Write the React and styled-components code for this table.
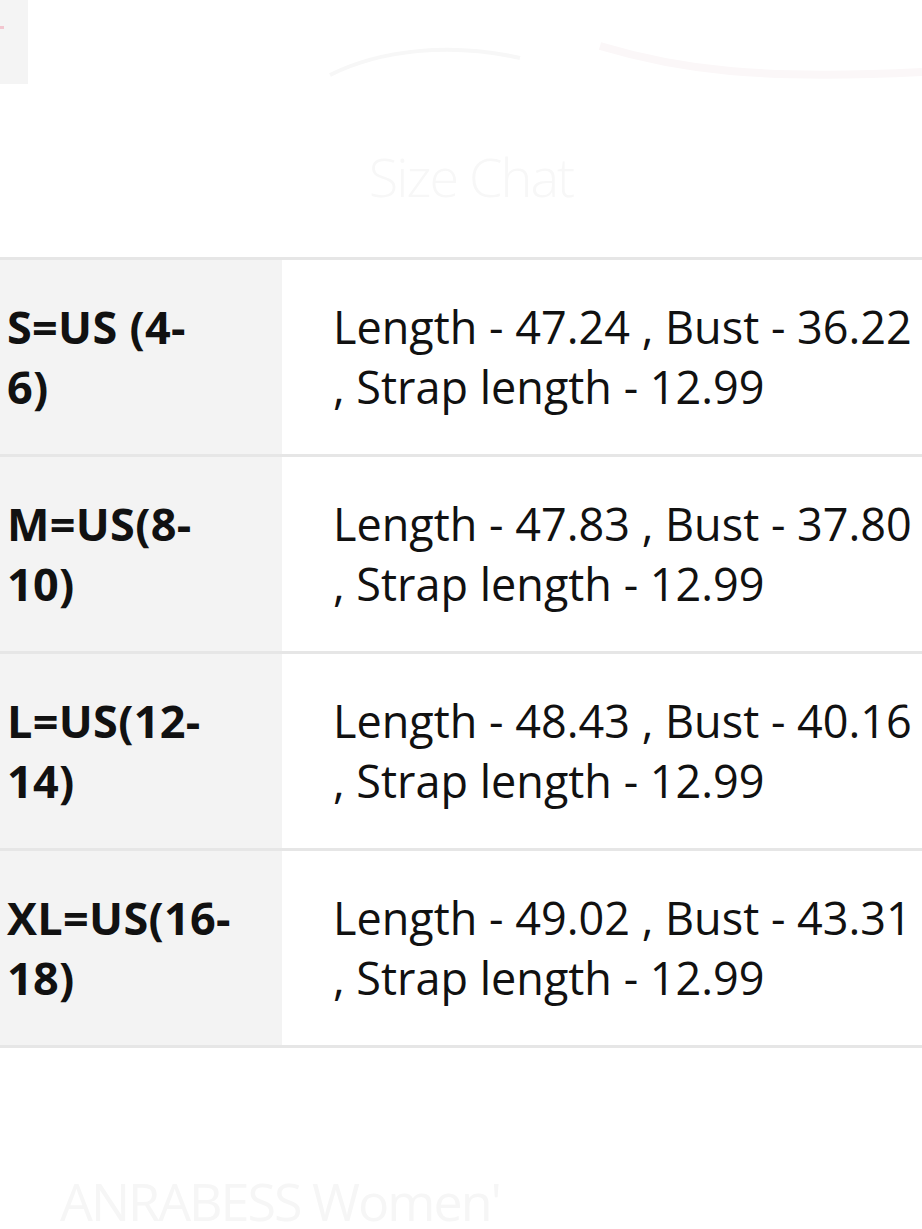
import React from "react";
import styled, { createGlobalStyle } from "styled-components";

const GlobalStyle = createGlobalStyle`
  html, body { margin: 0; padding: 0; background: #ffffff; }
  body { font-family: "Open Sans", "Noto Sans", sans-serif; color: #111111; }
`;

const Page = styled.div`
  width: 922px;
  height: 1229px;
  overflow: hidden;
  display: flex;
  flex-direction: column;
  background: #ffffff;
  & > * { flex-shrink: 0; }
`;

const Banner = styled.div`
  height: 84px;
  display: flex;
`;

const Title = styled.div`
  height: 173px;
  display: flex;
  align-items: center;
  justify-content: center;
  padding: 10px 0 0 20px;
  box-sizing: border-box;
  font-family: "Open Sans", sans-serif;
  font-weight: 300;
  font-size: 54px;
  letter-spacing: -2px;
  color: #f7f7f7;
`;

const Table = styled.div`
  display: flex;
  flex-direction: column;
  border-top: 3px solid #e6e6e6;
`;

const Row = styled.div`
  display: grid;
  grid-template-columns: 282px 1fr;
  height: 194px;
  flex-shrink: 0;
  border-bottom: 3px solid #e6e6e6;
`;

const Cell = styled.div`
  display: flex;
  align-items: center;
  font-size: 45px;
  line-height: 60px;
  background: ${(p) => (p.$head ? "#f3f3f3" : "#ffffff")};
  font-weight: ${(p) => (p.$head ? 700 : 400)};
  letter-spacing: ${(p) => (p.$head ? "0.3px" : "0")};
  padding: ${(p) => (p.$head ? "0 0 0 7px" : "0 0 0 51px")};
  color: #111111;
  white-space: nowrap;
`;

const Lines = styled.div`
  display: flex;
  flex-direction: column;
`;

const Caption = styled.div`
  margin-top: 117px;
  padding-left: 60px;
  font-family: "Open Sans", sans-serif;
  font-size: 52px;
  letter-spacing: -2px;
  color: #f6f6f6;
`;

const rows = [
  { a: "S=US (4-", b: "6)", l1: "Length - 47.24 , Bust - 36.22" },
  { a: "M=US(8-", b: "10)", l1: "Length - 47.83 , Bust - 37.80" },
  { a: "L=US(12-", b: "14)", l1: "Length - 48.43 , Bust - 40.16" },
  { a: "XL=US(16-", b: "18)", l1: "Length - 49.02 , Bust - 43.31" },
];

function BannerArt() {
  return (
    <svg width="922" height="84" viewBox="0 0 922 84">
      <rect x="0" y="0" width="28" height="84" fill="#f4f4f4" />
      <rect x="0" y="26" width="4" height="3" fill="#f2c6cf" />
      <path d="M330 75 C 380 50, 450 42, 520 58" stroke="#f7f7f7" strokeWidth="4" fill="none" />
      <path d="M600 46 C 680 70, 760 80, 922 72" stroke="#fbf7f8" strokeWidth="8" fill="none" />
    </svg>
  );
}

export default function App() {
  return (
    <Page>
      <GlobalStyle />
      <Banner>
        <BannerArt />
      </Banner>
      <Title>Size Chat</Title>
      <Table>
        {rows.map((r) => (
          <Row key={r.a}>
            <Cell $head>
              <Lines>
                <span>{r.a}</span>
                <span>{r.b}</span>
              </Lines>
            </Cell>
            <Cell>
              <Lines>
                <span>{r.l1}</span>
                <span>, Strap length - 12.99</span>
              </Lines>
            </Cell>
          </Row>
        ))}
      </Table>
      <Caption>ANRABESS Women'</Caption>
    </Page>
  );
}
